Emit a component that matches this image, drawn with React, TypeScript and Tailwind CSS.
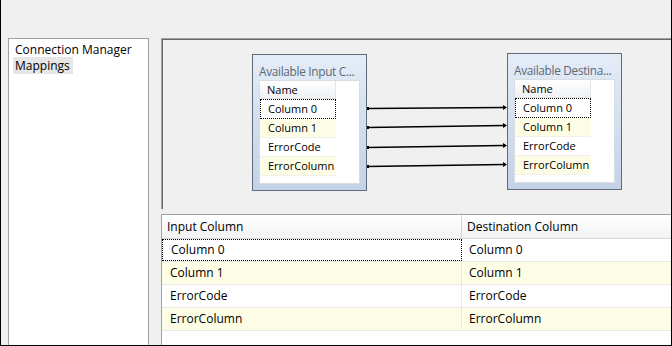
import React from "react";

const rows = ["Column 0", "Column 1", "ErrorCode", "ErrorColumn"];
const font = { fontFamily: '"Open Sans", "Noto Sans", sans-serif' };

function ColumnBox({ title, left, top }: { title: string; left: number; top: number }) {
  return (
    <div
      className="absolute w-[115px] h-[137px] border border-[#5f6b7a] bg-gradient-to-b from-[#e4ecf7] to-[#c3d2e7] px-[6px]"
      style={{ left, top }}
    >
      <div className="h-[25px] pt-[9px] text-[11.8px] tracking-[-0.3px] leading-[14px] text-[#5d6875] whitespace-nowrap">
        {title}
      </div>
      <div className="h-[104px] bg-white border border-[#d8dde5] text-[11px] text-black">
        <div className="w-[76px] h-[18px] pl-[7px] leading-[17px] bg-gradient-to-b from-white to-[#eef0f3] border-b border-r border-[#e2e4e8]">
          Name
        </div>
        {rows.map((r, i) => (
          <div
            key={r}
            className={`w-[76px] ${i === 0 ? "h-[20px] border border-dotted border-black pl-[7px]" : "h-[19px] border-b border-[#f1f1ea] pl-[8px]"} ${i % 2 === 1 ? "bg-[#fdfde6]" : "bg-white"} leading-[18px]`}
          >
            {r}
          </div>
        ))}
      </div>
    </div>
  );
}

function Links() {
  const ys = [
    [69, 68],
    [88, 86],
    [108, 106],
    [127, 125],
  ];
  return (
    <svg className="absolute inset-0 w-full h-full pointer-events-none" width="510" height="170">
      {ys.map(([a, b], i) => (
        <g key={i}>
          <line x1="205" y1={a + 0.5} x2="342" y2={b + 0.5} stroke="#000" strokeWidth="1.3" />
          <rect x="205" y={a - 1} width="2" height="3" fill="#000" />
          <path d={`M341 ${b - 2} L345 ${b + 0.5} L341 ${b + 3} Z`} fill="#000" />
        </g>
      ))}
    </svg>
  );
}

export default function App() {
  return (
    <div
      className="w-[672px] h-[346px] bg-[#f0f0f0] border-l border-r border-b border-black overflow-hidden flex pt-[38px] pl-[7px]"
      style={font}
    >
      {/* left navigation list */}
      <div className="w-[141px] h-[320px] shrink-0 bg-white border border-[#a0a0a0] pt-[3px] px-[4px] text-[12px] leading-[15px] text-black">
        <div className="pl-[2px] h-[15px]">Connection Manager</div>
        <div className="inline-block bg-[#e6e6e6] pl-[2px] pr-[3px] py-[1px]">Mappings</div>
      </div>

      <div className="flex-1 ml-[12px] flex flex-col min-w-0">
        {/* mapping diagram */}
        <div className="relative h-[171px] w-[520px] shrink-0 border-t border-l border-[#a0a0a0] shadow-[inset_1px_1px_0_#696969]">
          <ColumnBox title="Available Input C..." left={90} top={15} />
          <ColumnBox title="Available Destina..." left={345} top={14} />
          <Links />
        </div>

        {/* mapping grid */}
        <div className="mt-[5px] w-[520px] flex-1 bg-white border-t border-l border-[#a0a0a0] text-[12px] text-black">
          <div className="flex h-[24px] border-b border-[#d5d5d5] bg-gradient-to-b from-white to-[#f1f2f4] leading-[24px]">
            <div className="w-[300px] pl-[5px] border-r border-[#d5d5d5]">Input Column</div>
            <div className="flex-1 pl-[5px]">Destination Column</div>
          </div>
          {rows.map((r, i) => (
            <div
              key={r}
              className={`flex h-[23px] border-b border-[#e8e8e8] leading-[22px] ${i % 2 === 1 ? "bg-[#fdfde6]" : "bg-white"}`}
            >
              <div
                className={`w-[300px] pl-[8px] ${i === 0 ? "border border-dotted border-black leading-[20px]" : "border-r border-[#e8e8e8]"}`}
              >
                {r}
              </div>
              <div className="flex-1 pl-[7px]">{r}</div>
            </div>
          ))}
        </div>
      </div>
    </div>
  );
}
